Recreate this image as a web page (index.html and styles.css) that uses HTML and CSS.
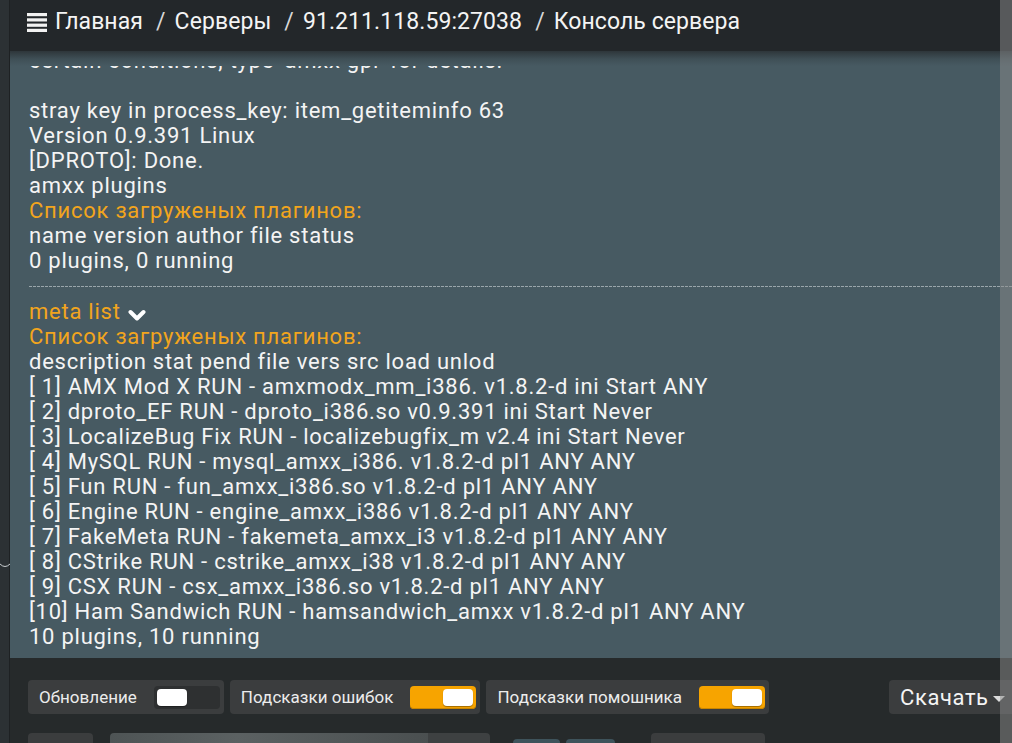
FILE: index.html
```html
<!DOCTYPE html>
<html lang="ru">
<head>
<meta charset="utf-8">
<title>Консоль сервера</title>
<link rel="stylesheet" href="styles.css">
</head>
<body>
<div class="page">
  <aside class="side">
    <svg class="side-curve" width="10" height="8" viewBox="0 0 10 8"><path d="M0 2 Q5 7 10 2" fill="none" stroke="#c9cdd0" stroke-width="1"/></svg>
  </aside>
  <div class="main">
    <header class="crumbs">
      <svg class="menu-icon" width="20" height="19" viewBox="0 0 20 19"><rect x="0" y="0" width="20" height="3.2" fill="#f2f2f2"/><rect x="0" y="5.3" width="20" height="3.2" fill="#f2f2f2"/><rect x="0" y="10.6" width="20" height="3.2" fill="#f2f2f2"/><rect x="0" y="15.8" width="20" height="3.2" fill="#f2f2f2"/></svg>
      <span class="crumb">Главная</span>
      <span class="sep">/</span>
      <span class="crumb">Серверы</span>
      <span class="sep">/</span>
      <span class="crumb">91.211.118.59:27038</span>
      <span class="sep">/</span>
      <span class="crumb">Консоль сервера</span>
    </header>

    <section class="console">
      <div class="viewport">
        <div class="log">
          <div class="block">
            <div class="line">certain conditions, type 'amxx gpl' for details.</div>
            <div class="line">&nbsp;</div>
            <div class="line">stray key in process_key: item_getiteminfo 63</div>
            <div class="line">Version 0.9.391 Linux</div>
            <div class="line">[DPROTO]: Done.</div>
            <div class="line">amxx plugins</div>
            <div class="line hl">Список загруженых плагинов:</div>
            <div class="line">name version author file status</div>
            <div class="line">0 plugins, 0 running</div>
          </div>
          <div class="divider"></div>
          <div class="block">
            <div class="line hl">meta list <svg class="chev" width="18" height="13" viewBox="0 0 18 13"><path d="M2.5 3 L9 9.5 L15.5 3" fill="none" stroke="#ffffff" stroke-width="4" stroke-linecap="round" stroke-linejoin="round"/></svg></div>
            <div class="line hl">Список загруженых плагинов:</div>
            <div class="line">description stat pend file vers src load unlod</div>
            <div class="line">[ 1] AMX Mod X RUN - amxmodx_mm_i386. v1.8.2-d ini Start ANY</div>
            <div class="line">[ 2] dproto_EF RUN - dproto_i386.so v0.9.391 ini Start Never</div>
            <div class="line">[ 3] LocalizeBug Fix RUN - localizebugfix_m v2.4 ini Start Never</div>
            <div class="line">[ 4] MySQL RUN - mysql_amxx_i386. v1.8.2-d pl1 ANY ANY</div>
            <div class="line">[ 5] Fun RUN - fun_amxx_i386.so v1.8.2-d pl1 ANY ANY</div>
            <div class="line">[ 6] Engine RUN - engine_amxx_i386 v1.8.2-d pl1 ANY ANY</div>
            <div class="line">[ 7] FakeMeta RUN - fakemeta_amxx_i3 v1.8.2-d pl1 ANY ANY</div>
            <div class="line">[ 8] CStrike RUN - cstrike_amxx_i38 v1.8.2-d pl1 ANY ANY</div>
            <div class="line">[ 9] CSX RUN - csx_amxx_i386.so v1.8.2-d pl1 ANY ANY</div>
            <div class="line">[10] Ham Sandwich RUN - hamsandwich_amxx v1.8.2-d pl1 ANY ANY</div>
            <div class="line">10 plugins, 10 running</div>
          </div>
        </div>
      </div>
    </section>

    <section class="controls">
      <div class="row">
        <div class="opt">
          <span class="opt-label">Обновление</span>
          <span class="switch"><span class="knob"></span></span>
        </div>
        <div class="opt">
          <span class="opt-label">Подсказки ошибок</span>
          <span class="switch on"><span class="knob"></span></span>
        </div>
        <div class="opt">
          <span class="opt-label">Подсказки помошника</span>
          <span class="switch on"><span class="knob"></span></span>
        </div>
        <div class="download">Скачать <span class="caret"></span></div>
      </div>
      <div class="row row2">
        <div class="box b1"></div>
        <div class="input"><span class="input-field"></span><span class="input-btn"></span></div>
        <div class="box teal"></div>
        <div class="box teal"></div>
        <div class="box b4"></div>
      </div>
    </section>
  </div>
</div>
<div class="scrollbar"></div>
</body>
</html>
```
FILE: styles.css
```css
html, body {
  margin: 0;
  padding: 0;
  width: 1012px;
  height: 743px;
  overflow: hidden;
  background: #262a2b;
  font-family: Roboto, "Noto Sans", sans-serif;
  color: #f4f4f4;
}

.page {
  display: flex;
  height: 743px;
}

.side {
  width: 9px;
  flex: none;
  background: #2c3134;
  border-right: 1px solid #1e2123;
  display: flex;
  flex-direction: column;
}

.side-curve {
  margin-top: 562px;
  display: block;
}

.main {
  flex: 1;
  display: flex;
  flex-direction: column;
  min-width: 0;
}

/* header */
.crumbs {
  height: 51px;
  flex: none;
  box-sizing: border-box;
  background: #23272a;
  display: flex;
  align-items: center;
  padding: 0 0 9px 17px;
  font-size: 23px;
  letter-spacing: 0.08px;
  white-space: nowrap;
}

.menu-icon {
  margin-right: 8px;
  margin-top: 2px;
}

.crumb {
  color: #f4f4f4;
}

.sep {
  color: #d8d8d8;
  margin: 0 9px 0 13px;
}

/* console */
.console {
  height: 607px;
  flex: none;
  box-sizing: border-box;
  padding-top: 15px;
  background: linear-gradient(to bottom, #2e363a 0, #3f4f56 8px, #475a62 15px, #475a62 100%);
  display: flex;
  flex-direction: column;
}

.viewport {
  flex: 1;
  overflow: hidden;
}

.log {
  margin-top: -18px;
  font-size: 22px;
  line-height: 25px;
  letter-spacing: 0.75px;
}

.block {
  padding-left: 19px;
}

.line {
  white-space: nowrap;
}

.hl {
  color: #f2a51d;
}

.chev {
  vertical-align: -3px;
  margin-left: 1px;
}

.divider {
  margin: 13px 0 12px 19px;
  height: 1px;
  background: repeating-linear-gradient(to right, #9aa6ab 0, #9aa6ab 3px, transparent 3px, transparent 4px);
}

/* controls */
.controls {
  flex: 1;
  background: #262a2b;
  padding: 22px 0 0 18px;
  display: flex;
  flex-direction: column;
  gap: 19px;
}

.row {
  display: flex;
  align-items: center;
  gap: 6px;
}

.opt {
  height: 34px;
  box-sizing: border-box;
  background: #3b3d3e;
  border-radius: 4px;
  display: flex;
  align-items: center;
  padding: 0 4px 0 11px;
  font-size: 17px;
  letter-spacing: 0.02px;
  color: #ececec;
}

.opt-label {
  margin-right: 17px;
}

.switch {
  width: 66px;
  height: 23px;
  border-radius: 4px;
  background: #2e3031;
  position: relative;
  display: flex;
  align-items: center;
  padding: 0 3px;
  box-sizing: border-box;
}

.switch.on {
  background: #f7a400;
  justify-content: flex-end;
  box-shadow: inset 0 -1px 0 #c88500;
}

.knob {
  width: 30px;
  height: 17px;
  border-radius: 4px;
  background: #ffffff;
  box-shadow: 0 1px 1px rgba(0,0,0,0.35);
}

.download {
  margin-left: auto;
  width: 123px;
  height: 34px;
  box-sizing: border-box;
  background: #3b3d3e;
  border-radius: 4px 0 0 4px;
  display: flex;
  align-items: center;
  padding-left: 11px;
  font-size: 22px;
  letter-spacing: 0.6px;
  color: #f4f4f4;
}

.caret {
  width: 0;
  height: 0;
  border-left: 6px solid transparent;
  border-right: 6px solid transparent;
  border-top: 6px solid #dcdcdc;
  margin-left: 4px;
  margin-top: 3px;
}

.row2 {
  align-items: flex-start;
}

.box {
  height: 34px;
  border-radius: 4px;
  background: #3b3d3e;
}

.b1 { width: 65px; margin-right: 11px; }
.input {
  width: 380px;
  height: 34px;
  display: flex;
  border-radius: 4px;
  overflow: hidden;
  margin-right: 17px;
}
.input-field {
  flex: 1;
  background: linear-gradient(to right, #4e5455 0, #5b6162 40%, #4a4f50 100%);
}
.input-btn {
  width: 62px;
  background: #3e4142;
}
.teal {
  background: #3e535b;
  margin-top: 6px;
}
.teal:nth-of-type(3) { width: 47px; }
.teal:nth-of-type(4) { width: 49px; margin-right: 30px; }
.b4 { width: 114px; }

.scrollbar {
  position: absolute;
  top: 0;
  right: 0;
  width: 12px;
  height: 743px;
  background: rgba(140, 140, 140, 0.5);
}
```
